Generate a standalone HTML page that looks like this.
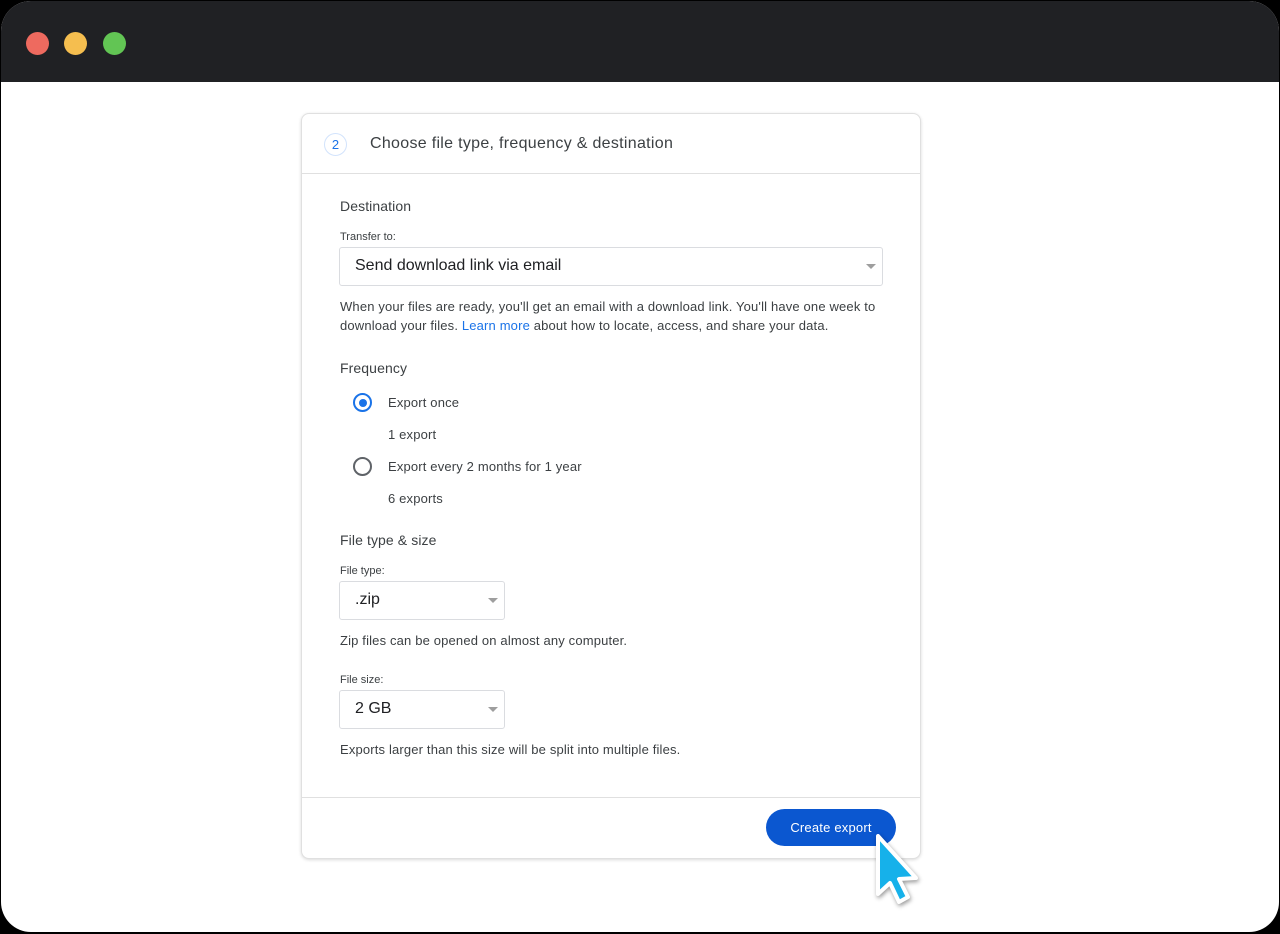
<!DOCTYPE html>
<html><head><style>
body{margin:0;width:1280px;height:934px;background:#000;font-family:"Liberation Sans",sans-serif;overflow:hidden;position:relative}
.win{position:absolute;left:1px;top:1px;width:1278px;height:931px;background:#fff;border-radius:30px;overflow:hidden}
.bar{height:81px;background:#202124}
.dot{position:absolute;top:31px;width:23px;height:23px;border-radius:50%}
.card{position:absolute;left:301px;top:113px;width:618px;height:744px;border:1px solid #e0e0e0;border-radius:8px;box-shadow:0 1px 3px rgba(0,0,0,.15);background:#fff}
.t{position:absolute;color:#3c4043;white-space:nowrap}
.sel{position:absolute;border:1px solid #dadce0;border-radius:3px;height:37px}
.sel span{position:absolute;left:15px;top:9px;font-size:16px;color:#202124}
.sel i{position:absolute;right:6px;top:16px;border:5px solid transparent;border-top-color:#9e9e9e}
.h{font-size:14px;color:#3c4043;letter-spacing:.1px}
.s{font-size:11px;color:#3c4043}
.p{font-size:13px;color:#3c4043;line-height:19px;letter-spacing:.16px}
</style></head><body>
<div class="win">
<div class="bar"></div>
<div class="dot" style="left:25px;background:#ee6a5f"></div>
<div class="dot" style="left:63px;background:#f5be4f"></div>
<div class="dot" style="left:102px;background:#62c554"></div>
</div>
<div class="card">
<div style="position:absolute;left:22px;top:19px;width:21px;height:21px;border:1px solid #d2e3fc;border-radius:50%;color:#1a73e8;font-size:13px;text-align:center;line-height:21px">2</div>
<div class="t" style="left:68px;top:21px;font-size:16px;letter-spacing:.3px">Choose file type, frequency &amp; destination</div>
<div style="position:absolute;left:0;right:0;top:59px;border-top:1px solid #e0e0e0"></div>
<div class="t h" style="left:38px;top:84px">Destination</div>
<div class="t s" style="left:38px;top:117px">Transfer to:</div>
<div class="sel" style="left:37px;top:133px;width:542px"><span>Send download link via email</span><i></i></div>
<div class="t p" style="left:38px;top:183px">When your files are ready, you'll get an email with a download link. You'll have one week to<br>download your files. <span style="color:#1a73e8">Learn more</span> about how to locate, access, and share your data.</div>
<div class="t h" style="left:38px;top:246px">Frequency</div>
<div style="position:absolute;left:51px;top:279px;width:15px;height:15px;border:2px solid #1a73e8;border-radius:50%"><div style="margin:3.5px;width:8px;height:8px;border-radius:50%;background:#1a73e8"></div></div>
<div class="t p" style="left:86px;top:279px">Export once</div>
<div class="t p" style="left:86px;top:311px">1 export</div>
<div style="position:absolute;left:51px;top:343px;width:15px;height:15px;border:2px solid #5f6368;border-radius:50%"></div>
<div class="t p" style="left:86px;top:343px">Export every 2 months for 1 year</div>
<div class="t p" style="left:86px;top:375px">6 exports</div>
<div class="t h" style="left:38px;top:418px">File type &amp; size</div>
<div class="t s" style="left:38px;top:451px">File type:</div>
<div class="sel" style="left:37px;top:467px;width:164px"><span>.zip</span><i></i></div>
<div class="t p" style="left:38px;top:517px">Zip files can be opened on almost any computer.</div>
<div class="t s" style="left:38px;top:560px">File size:</div>
<div class="sel" style="left:37px;top:576px;width:164px"><span>2 GB</span><i></i></div>
<div class="t p" style="left:38px;top:626px">Exports larger than this size will be split into multiple files.</div>
<div style="position:absolute;left:0;right:0;top:683px;border-top:1px solid #e0e0e0"></div>
<div style="position:absolute;left:464px;top:695px;width:130px;height:37px;border-radius:19px;background:#0b57d0;color:#fff;font-size:13px;text-align:center;line-height:37px;letter-spacing:.2px">Create export</div>
</div>
<svg style="position:absolute;left:868px;top:828px" width="60" height="84" viewBox="0 0 60 84">
<path d="M10 8 L10 66 L22 55 L31 74 L40 69 L31 51 L48 50 Z" fill="#16b1ea" stroke="#fff" stroke-width="4" stroke-linejoin="round" style="filter:drop-shadow(1px 2px 2px rgba(0,0,0,.4))"/>
</svg>
</body></html>
